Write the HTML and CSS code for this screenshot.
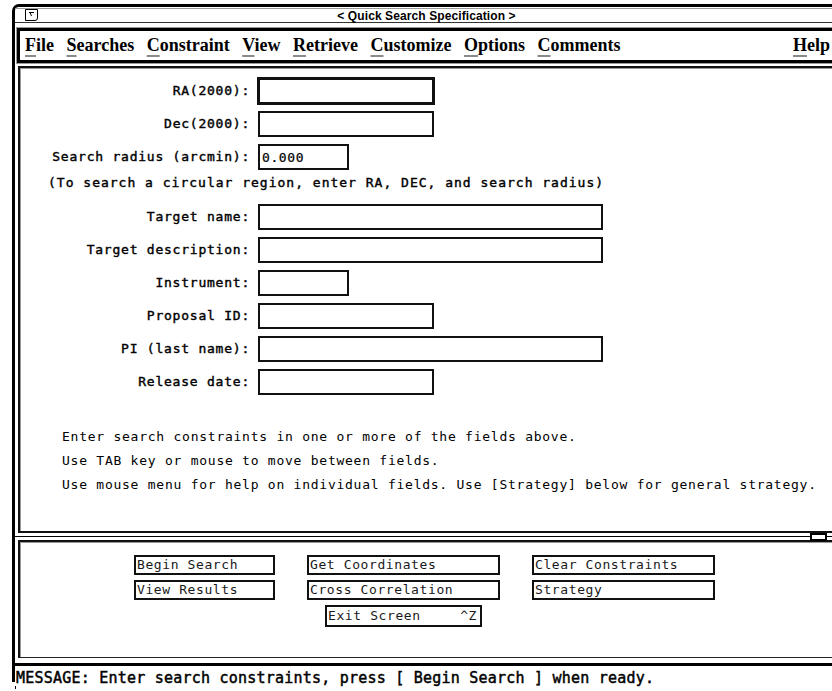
FILE: index.html
```html
<!DOCTYPE html>
<html lang="en">
<head>
<meta charset="utf-8">
<title>Quick Search Specification</title>
<link rel="stylesheet" href="styles.css">
</head>
<body>
<div class="window">
  <div class="titlebar">
    <div class="wm-menu">
      <svg width="13" height="12" viewBox="0 0 13 12">
        <path d="M0.5 0.5 H12.5 V9 Q12.5 11.5 10 11.5 H0.5 Z" fill="none" stroke="#000" stroke-width="1"/>
        <path d="M4 3.5 H9 M5 3.5 L6.5 7" fill="none" stroke="#000" stroke-width="1"/>
      </svg>
    </div>
    <div class="title">&lt; Quick Search Specification &gt;</div>
    <div></div>
  </div>

  <nav class="menubar">
    <span class="menu"><u>F</u>ile</span>
    <span class="menu"><u>S</u>earches</span>
    <span class="menu"><u>C</u>onstraint</span>
    <span class="menu"><u>V</u>iew</span>
    <span class="menu"><u>R</u>etrieve</span>
    <span class="menu"><u>C</u>ustomize</span>
    <span class="menu"><u>O</u>ptions</span>
    <span class="menu"><u>C</u>omments</span>
    <span class="menu help"><u>H</u>elp</span>
  </nav>

  <section class="form-panel">
    <div class="fields">
      <span class="lbl">RA(2000):</span><div class="field medium focused"></div>
      <span class="lbl">Dec(2000):</span><div class="field medium"></div>
      <span class="lbl">Search radius (arcmin):</span><div class="field small">0.000</div>
      <div class="note">(To search a circular region, enter RA, DEC, and search radius)</div>
      <span class="lbl">Target name:</span><div class="field wide"></div>
      <span class="lbl">Target description:</span><div class="field wide"></div>
      <span class="lbl">Instrument:</span><div class="field small"></div>
      <span class="lbl">Proposal ID:</span><div class="field medium"></div>
      <span class="lbl">PI (last name):</span><div class="field wide"></div>
      <span class="lbl">Release date:</span><div class="field medium"></div>
    </div>
    <div class="hints">
      <p>Enter search constraints in one or more of the fields above.</p>
      <p>Use TAB key or mouse to move between fields.</p>
      <p>Use mouse menu for help on individual fields. Use [Strategy] below for general strategy.</p>
    </div>
  </section>

  <div class="sash-row">
    <div class="sash-line"></div>
    <div class="sash"></div>
    <div class="sash-line tail"></div>
  </div>

  <section class="button-panel">
    <div class="buttons">
      <div class="btn">Begin Search</div>
      <div class="btn">Get Coordinates</div>
      <div class="btn">Clear Constraints</div>
      <div class="btn">View Results</div>
      <div class="btn">Cross Correlation</div>
      <div class="btn">Strategy</div>
      <div class="btn exit"><span>Exit Screen</span><span>^Z</span></div>
    </div>
  </section>

  <div class="message">MESSAGE: Enter search constraints, press [ Begin Search ] when ready.</div>
</div>
<div class="tick"></div>
</body>
</html>
```

FILE: styles.css
```css
html, body {
  margin: 0;
  padding: 0;
  background: #fff;
  overflow: hidden;
}

body {
  width: 832px;
  height: 691px;
  font-family: "DejaVu Sans Mono", monospace;
  color: #000;
}

/* outer window frame, wider than the viewport on the right */
.window {
  margin: 4px 0 0 12px;
  width: 826px;
  height: 678px;
  box-sizing: border-box;
  border-left: 3px solid #000;
  border-top: 3px solid #000;
  border-top-left-radius: 7px;
}

/* title bar */
.titlebar {
  display: grid;
  grid-template-columns: 1fr auto 1fr;
  align-items: start;
  margin-top: 1px;
  height: 13px;
  border-top: 1px solid #9a9a9a;
  border-bottom: 1px solid #333;
}

.wm-menu {
  margin-left: 10px;
  width: 13px;
  height: 12px;
  line-height: 0;
}

.title {
  font-family: "Liberation Sans", Arial, sans-serif;
  font-weight: bold;
  font-size: 12px;
  line-height: 14px;
  letter-spacing: 0.1px;
}

/* menu bar */
.menubar {
  display: flex;
  align-items: flex-start;
  gap: 12.5px;
  margin: 5px 0 0 2px;
  height: 35px;
  box-sizing: border-box;
  padding: 6px 5px 0;
  border: 3px solid #000;
  box-shadow: 0 0 0 1px #999;
  font-family: "Liberation Serif", "Times New Roman", serif;
  font-weight: bold;
  font-size: 18px;
  line-height: 16px;
}

.menu u {
  text-decoration: underline;
  text-decoration-color: #8a8a8a;
  text-decoration-thickness: 2px;
  text-underline-offset: 4px;
}

.menu.help {
  margin-left: auto;
}

/* search form */
.form-panel {
  margin: 3px 0 0 3px;
  height: 467px;
  box-sizing: border-box;
  padding-top: 10px;
  border: 2px solid #111;
  border-right: none;
  box-shadow: inset 1px 1px 0 #999;
}

.fields {
  display: grid;
  grid-template-columns: 230px auto;
  column-gap: 8px;
  row-gap: 7px;
  justify-items: start;
  align-items: center;
}

.lbl {
  justify-self: end;
  font-size: 13px;
  line-height: 16px;
  letter-spacing: 0.77px;
  -webkit-text-stroke: 0.4px #000;
  white-space: pre;
}

.field {
  height: 26px;
  box-sizing: border-box;
  border: 2px solid #111;
  background: #fff;
  display: flex;
  align-items: center;
  padding-left: 2px;
  font-size: 13px;
  letter-spacing: 0.6px;
  -webkit-text-stroke: 0.2px #000;
}

.field.wide { width: 345px; }
.field.medium { width: 176px; }
.field.small { width: 91px; }

.field.focused {
  width: 178px;
  height: 28px;
  margin: -1px;
  border-width: 3px;
}

.note {
  grid-column: 1 / -1;
  margin: -4px 0 4px;
  padding-left: 28px;
  height: 20px;
  line-height: 20px;
  font-size: 13px;
  letter-spacing: 1px;
  -webkit-text-stroke: 0.4px #000;
  white-space: pre;
}

.hints {
  margin-top: 30px;
  padding-left: 42px;
  font-size: 13px;
  line-height: 24px;
  letter-spacing: 0.75px;
}

.hints p {
  margin: 0;
  white-space: pre;
}

/* pane divider with its grab handle */
.sash-row {
  display: flex;
  align-items: center;
  height: 7px;
}

.sash-line {
  flex: 0 0 795px;
  height: 1px;
  background: #000;
}

.sash-line.tail {
  flex: 1 1 auto;
}

.sash {
  flex: 0 0 17px;
  align-self: flex-start;
  height: 8px;
  box-sizing: border-box;
  border: 2px solid #000;
  background: #fff;
}

/* action buttons */
.button-panel {
  margin-left: 3px;
  height: 118px;
  box-sizing: border-box;
  padding: 13px 0 0 114px;
  border-top: 2px solid #111;
  border-left: 2px solid #111;
  border-bottom: 1px solid #222;
  box-shadow: inset 1px 1px 0 #999;
}

.buttons {
  display: grid;
  grid-template-columns: 141px 193px 183px;
  column-gap: 32px;
  row-gap: 5px;
}

.btn {
  height: 20px;
  box-sizing: border-box;
  border: 2px solid #111;
  padding-left: 1px;
  display: flex;
  align-items: center;
  font-size: 13px;
  line-height: 16px;
  letter-spacing: 0.6px;
  color: #1a1a1a;
  white-space: pre;
}

.btn.exit {
  grid-column: 2;
  justify-self: center;
  width: 157px;
  height: 22px;
  justify-content: space-between;
  padding-right: 3px;
}

/* status line */
.message {
  margin-top: 5px;
  border-top: 3px solid #000;
  padding: 3px 0 0 1px;
  font-size: 15px;
  line-height: 18px;
  letter-spacing: 0.22px;
  -webkit-text-stroke: 0.45px #000;
  white-space: nowrap;
}

.tick {
  margin: 4px 0 0 15px;
  width: 1px;
  height: 3px;
  background: #000;
}
```
